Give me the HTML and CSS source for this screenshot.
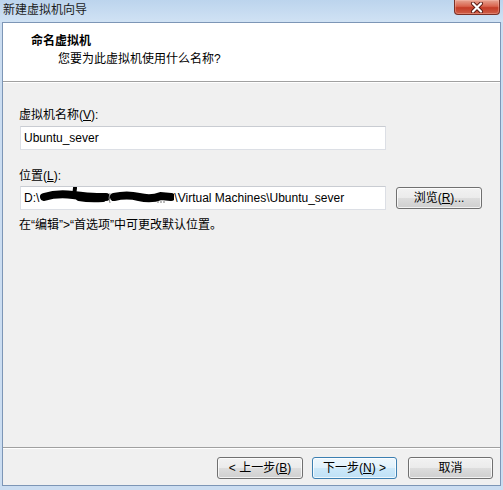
FILE: index.html
```html
<!DOCTYPE html>
<html lang="zh-CN">
<head>
<meta charset="utf-8">
<title>新建虚拟机向导</title>
<link rel="stylesheet" href="styles.css">
</head>
<body>
<div class="window">
  <div class="titlebar">
    <span class="title">新建虚拟机向导</span>
    <div class="close">
      <svg width="14" height="11" viewBox="0 0 14 11">
        <path d="M3 1.5 L11 9.5 M11 1.5 L3 9.5" stroke="#5a1a12" stroke-width="4" stroke-linecap="round"/>
        <path d="M3 1.5 L11 9.5 M11 1.5 L3 9.5" stroke="#ffffff" stroke-width="2.2" stroke-linecap="round"/>
      </svg>
    </div>
  </div>
  <div class="client">
    <div class="header">
      <div class="h-title">命名虚拟机</div>
      <div class="h-sub">您要为此虚拟机使用什么名称?</div>
    </div>
    <div class="sep"></div>
    <div class="body">
      <div class="label">虚拟机名称(<u>V</u>):</div>
      <div class="row r1"><div class="textbox">Ubuntu_sever</div></div>
      <div class="label l2">位置(<u>L</u>):</div>
      <div class="row r2">
        <div class="textbox">D:\<svg class="redact" width="135" height="22" viewBox="0 0 135 22">
            <path d="M60 11 h3 M65 11 h3 M69 11 h2" stroke="#777" stroke-width="1"/>
            <path d="M5 10 Q 18 6 34 8 T 58 10 L 67 10" stroke="#000" stroke-width="8" fill="none" stroke-linecap="round"/>
            <path d="M40 11 Q 50 13 64 12" stroke="#000" stroke-width="6" fill="none" stroke-linecap="round"/>
            <path d="M35 9 L36 1" stroke="#000" stroke-width="4" stroke-linecap="round"/>
            <path d="M71 6 Q 69 11 71 16" stroke="#888" stroke-width="1" fill="none"/>
            <path d="M75 10 Q 88 7 100 10 T 122 9 L 132 10" stroke="#000" stroke-width="8" fill="none" stroke-linecap="round"/>
            <path d="M118 15 h2 M121 15 h2 M124 15 h2" stroke="#777" stroke-width="1"/>
          </svg>\Virtual Machines\Ubuntu_sever</div>
        <button class="btn browse">浏览(<u>R</u>)...</button>
      </div>
      <div class="hint">在“编辑”&gt;“首选项”中可更改默认位置。</div>
    </div>
    <div class="sep"></div>
    <div class="footer">
      <button class="btn back">&lt; 上一步(<u>B</u>)</button>
      <button class="btn next">下一步(<u>N</u>) &gt;</button>
      <button class="btn cancel">取消</button>
    </div>
  </div>
</div>
</body>
</html>
```

FILE: styles.css
```css
html, body {
  margin: 0;
  padding: 0;
}

body {
  width: 503px;
  height: 490px;
  overflow: hidden;
  background: #cbddf1;
  font: 12px "Liberation Sans", "Noto Sans CJK SC", sans-serif;
  color: #000;
}

.window {
  display: flex;
  flex-direction: column;
  height: 490px;
}

.titlebar {
  height: 22px;
  flex: none;
  display: flex;
  justify-content: space-between;
  align-items: flex-start;
  background: linear-gradient(#bcd4ed, #d0e2f4);
}

.title {
  padding-left: 3px;
  line-height: 20px;
  color: #1b1b1b;
}

.close {
  width: 44px;
  height: 14px;
  margin-right: 3px;
  border: 1px solid #7a3026;
  border-top: none;
  border-radius: 0 0 4px 4px;
  background: linear-gradient(#e7a492 0%, #d9644e 45%, #c43c27 55%, #cf5f48 100%);
  box-shadow: inset 0 0 0 1px rgba(255, 200, 190, 0.35);
  display: flex;
  align-items: center;
  justify-content: center;
}

.client {
  flex: 1;
  margin: 0 2px 4px 2px;
  border: 1px solid #7d96b6;
  background: #f0f0f0;
  display: flex;
  flex-direction: column;
}

.header {
  height: 58px;
  flex: none;
  box-sizing: border-box;
  background: #fff;
  padding: 9px 0 0 28px;
}

.h-title {
  font-weight: bold;
  line-height: 18px;
}

.h-sub {
  line-height: 18px;
  padding-left: 27px;
}

.sep {
  flex: none;
  height: 1px;
  border-top: 1px solid #a0a0a0;
  background: #fff;
}

.body {
  flex: 1;
  padding: 24px 0 0 16px;
}

.label {
  line-height: 16px;
}

.l2 {
  margin-top: 18px;
}

.row {
  display: flex;
  align-items: center;
}

.r1 {
  margin-top: 3px;
}

.r2 {
  margin-top: 2px;
}

.textbox {
  box-sizing: border-box;
  width: 366px;
  height: 24px;
  margin-left: 1px;
  padding-left: 3px;
  line-height: 22px;
  background: #fff;
  border: 1px solid #dcdfe5;
  border-top-color: #c9ccd2;
  white-space: nowrap;
  overflow: hidden;
}

.redact {
  vertical-align: top;
}

.btn {
  box-sizing: border-box;
  height: 22px;
  padding: 0;
  border: 1px solid #707070;
  border-radius: 3px;
  background: linear-gradient(#f2f2f2 0%, #ebebeb 50%, #dddddd 50%, #cfcfcf 100%);
  box-shadow: inset 0 0 0 1px rgba(255, 255, 255, 0.75);
  font: inherit;
  color: #000;
  line-height: 20px;
}

.browse {
  width: 86px;
  margin-left: 10px;
}

.hint {
  margin-top: 7px;
  line-height: 16px;
}

.footer {
  height: 36px;
  flex: none;
  box-sizing: border-box;
  padding: 8px 7px 0 0;
  display: flex;
  justify-content: flex-end;
  align-items: flex-start;
}

.back {
  width: 86px;
}

.next {
  width: 85px;
  margin-left: 9px;
  border-color: #3c7fb1;
  background: linear-gradient(#eef7fd 0%, #e0f1fc 50%, #cde9fa 50%, #bfe1f6 100%);
}

.cancel {
  width: 85px;
  margin-left: 11px;
}
```
